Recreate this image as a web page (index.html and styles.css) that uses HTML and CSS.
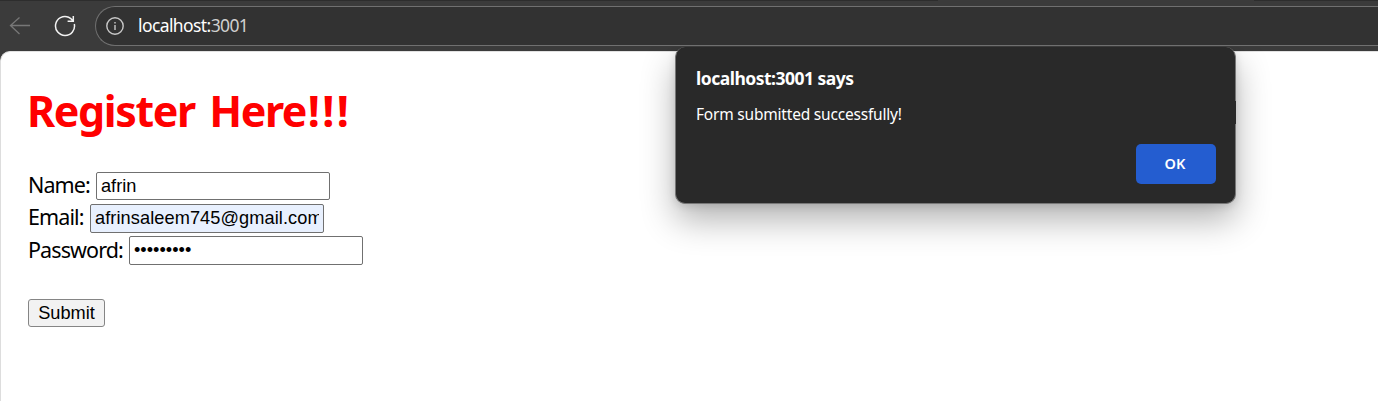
FILE: index.html
```html
<!DOCTYPE html>
<html lang="en">
<head>
<meta charset="utf-8">
<title>localhost:3001</title>
<link rel="stylesheet" href="styles.css">
</head>
<body>
<header class="toolbar">
  <svg class="back" width="22" height="20" viewBox="0 0 22 20"><path d="M21 9.5H1.5M10.5 1.5L1.5 9.5L10.5 18"/></svg>
  <svg class="reload" width="22" height="22" viewBox="0 0 22 22"><path d="M20.3 9A9.5 9.5 0 1 1 14.6 2.2Q17 3.2 18.8 5.6M19.3 1V6.2H13.6"/></svg>
  <div class="address">
    <svg class="info" width="18" height="18" viewBox="0 0 18 18"><circle cx="9" cy="9" r="8.2"/><path d="M9 8V13M9 5V6.5"/></svg>
    <span class="url">localhost:<span class="port">3001</span></span>
  </div>
</header>
<main class="page">
  <h1 class="title">Register Here<span class="bangs">!!!</span></h1>
  <form class="form">
    <div class="row"><label class="label name" for="name">Name:</label><input class="input short" id="name" type="text" value="afrin"></div>
    <div class="row"><label class="label email" for="email">Email:</label><input class="input filled" id="email" type="text" value="afrinsaleem745@gmail.com"></div>
    <div class="row"><label class="label password" for="password">Password:</label><input class="input" id="password" type="password" value="secret123"></div>
    <button class="submit" type="button">Submit</button>
  </form>
</main>
<section class="dialog" role="dialog">
  <h2 class="heading">localhost:3001 says</h2>
  <p class="message">Form submitted successfully!</p>
  <button class="ok" type="button">OK</button>
</section>
</body>
</html>
```
FILE: styles.css
```css
* { box-sizing: border-box; }
body {
  margin: 0;
  height: 401px;
  overflow: hidden;
  background: #3b3b3b;
  font-family: "Noto Sans", "Open Sans", sans-serif;
}
svg { fill: none; flex: none; }
.toolbar {
  display: flex;
  align-items: center;
  height: 51px;
  padding-left: 9px;
  background:
    linear-gradient(#2d2d2d, #2d2d2d) 0 0 / 938px 1px no-repeat,
    linear-gradient(#2d2d2d, #2d2d2d) 1254px 0 / 124px 1px no-repeat,
    #3b3b3b;
}
.back { stroke: #777; stroke-width: 1.3; }
.reload { margin-left: 23px; stroke: #f2f2f2; stroke-width: 1.5; }
.address {
  display: flex;
  align-items: center;
  flex: 1;
  height: 40px;
  margin-left: 19px;
  padding-left: 10px;
  border: 1px solid #707070;
  border-right: 0;
  border-radius: 20px 0 0 20px;
  background: #323232;
}
.info { stroke: #c8c8c8; stroke-width: 1.4; }
.url {
  margin: -2px 0 0 14px;
  color: #fff;
  font-size: 17.5px;
  letter-spacing: -0.6px;
  white-space: nowrap;
}
.port { color: #cfcfcf; }
.page {
  height: 350px;
  padding: 27px 27px 0;
  border-top: 1px solid #e2e2e2;
  border-left: 1px solid #ddd;
  border-top-left-radius: 10px;
  background: #fff;
}
.title {
  height: 64px;
  margin: 0 0 28px -1px;
  color: #f00;
  font-size: 43px;
  line-height: 64px;
  letter-spacing: -1.4px;
  word-spacing: 4.5px;
  white-space: nowrap;
}
.bangs { margin-left: 1.5px; letter-spacing: 2.4px; }
.row { display: flex; height: 32px; }
.label {
  color: #000;
  font-size: 21.5px;
  line-height: 27px;
  letter-spacing: -0.9px;
  white-space: nowrap;
}
.name { width: 68px; }
.email { width: 62px; }
.password { width: 101px; line-height: 29px; }
.input {
  width: 234px;
  height: 29px;
  margin-top: 1px;
  padding: 1px 4px;
  border: 1px solid #707070;
  border-radius: 2px;
  outline: 0;
  background: #fff;
  color: #000;
  font: 18.2px "Liberation Sans", Arial, sans-serif;
}
.short { height: 28px; }
.filled { background: #e8f0fe; letter-spacing: 0.08px; }
.submit {
  width: 77px;
  height: 28px;
  margin-top: 32px;
  padding: 0;
  border: 1px solid #858585;
  border-radius: 3px;
  background: #f2f2f2;
  color: #000;
  font: 18.2px "Liberation Sans", Arial, sans-serif;
}
.dialog {
  position: absolute;
  top: 47px;
  left: 675px;
  display: flex;
  flex-direction: column;
  width: 561px;
  height: 157px;
  padding: 18px 20px 19px 20px;
  border: solid #777;
  border-width: 0 1px 1px;
  border-radius: 10px;
  background: #292929;
  box-shadow: 0 16px 34px rgba(0, 0, 0, .3), 0 2px 8px rgba(0, 0, 0, .12);
  clip-path: inset(0 -60px -80px -60px);
  color: #fff;
}
.dialog::after {
  content: "";
  position: absolute;
  top: 54px;
  right: -1px;
  width: 1px;
  height: 23px;
  background: #292929;
}
.heading {
  margin: 0;
  font-size: 17.5px;
  line-height: 26px;
  letter-spacing: -0.5px;
}
.message {
  margin: 11px 0 0;
  font-size: 15.5px;
  line-height: 24px;
  letter-spacing: -0.2px;
}
.ok {
  align-self: flex-end;
  width: 80px;
  height: 40px;
  flex: none;
  margin-top: 18px;
  margin-right: -1px;
  padding: 0 2px 2px 0;
  border: 0;
  border-radius: 5px;
  background: #245dd0;
  color: #fff;
  font: 600 14.5px "Noto Sans", "Open Sans", sans-serif;
}
```
